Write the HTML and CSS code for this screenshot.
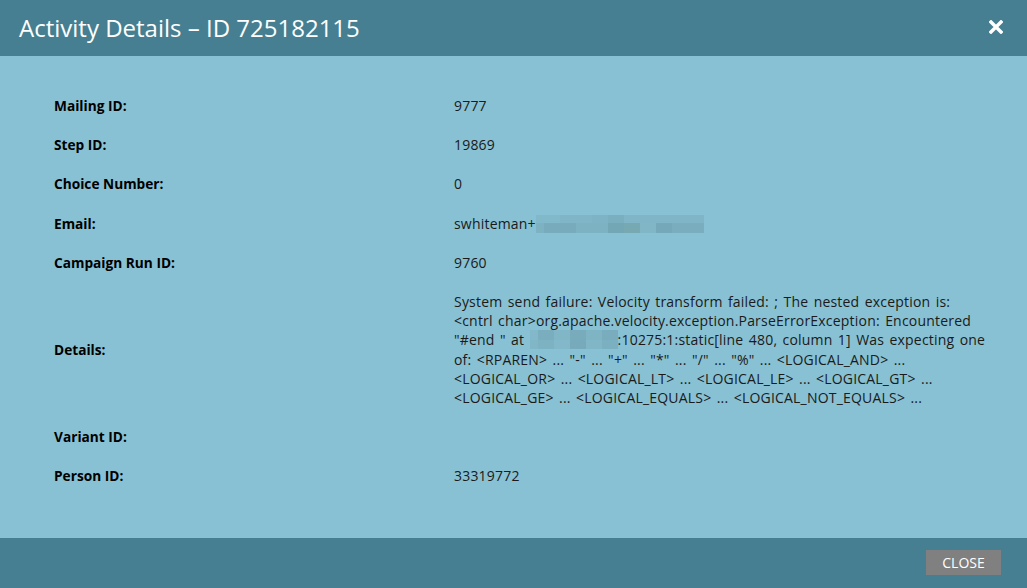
FILE: index.html
```html
<!DOCTYPE html>
<html>
<head>
<meta charset="utf-8">
<link rel="stylesheet" href="styles.css">
</head>
<body>
<div class="dialog">
  <header class="dlg-header">
    <h1 class="dlg-title">Activity Details – ID 725182115</h1>
    <button class="dlg-x" aria-label="Close">
      <svg width="14" height="14" viewBox="0 0 14 14"><path d="M2 2 L12 12 M12 2 L2 12" stroke="#fff" stroke-width="3.4" stroke-linecap="square"/></svg>
    </button>
  </header>
  <main class="dlg-body">
    <table class="details">
      <tr><th>Mailing ID:</th><td>9777</td></tr>
      <tr><th>Step ID:</th><td>19869</td></tr>
      <tr><th>Choice Number:</th><td>0</td></tr>
      <tr><th>Email:</th><td>swhiteman+<span class="blur blur-email"></span></td></tr>
      <tr><th>Campaign Run ID:</th><td>9760</td></tr>
      <tr><th>Details:</th><td>System send failure: Velocity transform failed: ; The nested exception is: &lt;cntrl char&gt;org.apache.velocity.exception.ParseErrorException: Encountered "#end " at <span class="blur blur-host"></span>:10275:1:static[line 480, column 1] Was expecting one of: &lt;RPAREN&gt; ... "-" ... "+" ... "*" ... "/" ... "%" ... &lt;LOGICAL_AND&gt; ... &lt;LOGICAL_OR&gt; ... &lt;LOGICAL_LT&gt; ... &lt;LOGICAL_LE&gt; ... &lt;LOGICAL_GT&gt; ... &lt;LOGICAL_GE&gt; ... &lt;LOGICAL_EQUALS&gt; ... &lt;LOGICAL_NOT_EQUALS&gt; ...</td></tr>
      <tr><th>Variant ID:</th><td></td></tr>
      <tr><th>Person ID:</th><td>33319772</td></tr>
    </table>
  </main>
  <footer class="dlg-footer">
    <button class="btn-close">CLOSE</button>
  </footer>
</div>
</body>
</html>
```

FILE: styles.css
```css
html, body {
  margin: 0;
  padding: 0;
  width: 1027px;
  height: 588px;
  overflow: hidden;
  font-family: "Open Sans", "Noto Sans", sans-serif;
}
.dialog {
  display: flex;
  flex-direction: column;
  height: 588px;
  background: #88c1d3;
}
.dlg-header {
  height: 56px;
  flex: none;
  background: #467f91;
  display: flex;
  align-items: center;
  justify-content: space-between;
  padding: 0 24px 0 19px;
}
.dlg-title {
  margin: 0;
  color: #fff;
  font-weight: 400;
  font-size: 24px;
  line-height: 30px;
  padding-bottom: 0;
}
.dlg-x {
  border: 0;
  background: none;
  padding: 0;
  width: 14px;
  height: 14px;
  display: flex;
  margin-bottom: 2px;
}
.dlg-body {
  flex: 1;
  padding: 30px 0 0 54px;
}
.details {
  border-collapse: collapse;
  line-height: 19.2px;
}
.details th {
  width: 400px;
  text-align: left;
  font-size: 13.7px;
  font-weight: 700;
  color: #000;
  padding: 10px 0;
  vertical-align: middle;
}
.details td {
  width: 534px;
  font-size: 14px;
  letter-spacing: 0.2px;
  word-spacing: 1.5px;
  color: #1a1a1a;
  padding: 10px 0;
  vertical-align: middle;
}
.blur {
  display: inline-block;
  vertical-align: -4px;
}
.blur-email {
  width: 168px;
  height: 18px;
  background:
    linear-gradient(90deg, #82b9ca 0 24px, #7fb5c6 24px 56px, #7db3c4 56px 72px, #7aafc0 72px 88px, #7fb5c6 88px 168px) top / 168px 8px no-repeat,
    linear-gradient(90deg, #7db2c2 0 8px, #78acbc 8px 40px, #7db2c2 40px 72px, #74a7b6 72px 88px, #77a9b3 88px 104px, #80b6c6 104px 120px, #75a9b9 120px 136px, #7aaebe 136px 168px) bottom / 168px 10px no-repeat;
}
.blur-host {
  width: 88px;
  height: 19px;
  background:
    linear-gradient(90deg, #82b8c9 0 8px, #7aaebe 8px 24px, #80b6c6 24px 40px, #78acbc 40px 56px, #7eb4c4 56px 72px, #79adbd 72px 88px) top / 88px 10px no-repeat,
    linear-gradient(90deg, #80b6c6 0 8px, #7db2c2 8px 24px, #82b8c9 24px 40px, #77abbb 40px 56px, #80b6c6 56px 72px, #7bb0c0 72px 88px) bottom / 88px 9px no-repeat;
}
.dlg-footer {
  height: 50px;
  flex: none;
  background: #467f91;
  display: flex;
  align-items: center;
  justify-content: flex-end;
  padding: 0 26px 0 0;
}
.btn-close {
  width: 75px;
  height: 25px;
  border: 0;
  background: #808080;
  color: #fff;
  font-family: "Open Sans", "Noto Sans", sans-serif;
  font-size: 14px;
  padding: 0;
  margin-bottom: 2px;
}
```
